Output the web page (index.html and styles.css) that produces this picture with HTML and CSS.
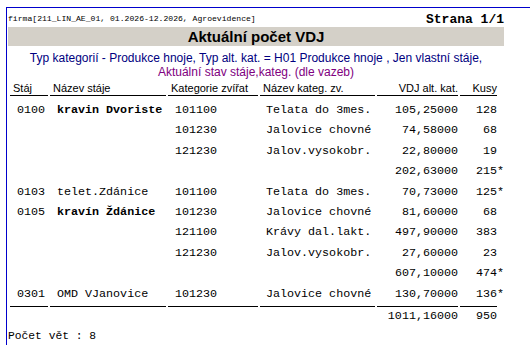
FILE: index.html
```html
<!DOCTYPE html>
<html lang="cs">
<head>
<meta charset="utf-8">
<title>Aktuální počet VDJ</title>
<link rel="stylesheet" href="styles.css">
</head>
<body>
<div class="page">
  <div class="top">
    <span class="firma">firma[211_LIN_AE_01, 01.2026-12.2026, Agroevidence]</span>
    <span class="strana">Strana 1/1</span>
  </div>
  <div class="titlebar">Aktuální počet VDJ</div>
  <div class="sub sub1">Typ kategorií - Produkce hnoje, Typ alt. kat. = H01 Produkce hnoje , Jen vlastní stáje,</div>
  <div class="sub sub2">Aktuální stav stáje,kateg. (dle vazeb)</div>

  <div class="grid head">
    <div class="h">Stáj</div>
    <div class="h">Název stáje</div>
    <div class="h">Kategorie zvířat</div>
    <div class="h">Název kateg. zv.</div>
    <div class="h r">VDJ alt. kat.</div>
    <div class="h r">Kusy</div>
  </div>

  <div class="rows">
    <div class="grid row"><div class="c">0100</div><div class="c b">kravin Dvoriste</div><div class="c">101100</div><div class="c n">Telata do 3mes.</div><div class="c r">105,25000</div><div class="c r">128</div></div>
    <div class="grid row"><div class="c"></div><div class="c"></div><div class="c">101230</div><div class="c n">Jalovice chovné</div><div class="c r">74,58000</div><div class="c r">68</div></div>
    <div class="grid row"><div class="c"></div><div class="c"></div><div class="c">121230</div><div class="c n">Jalov.vysokobr.</div><div class="c r">22,80000</div><div class="c r">19</div></div>
    <div class="grid row"><div class="c"></div><div class="c"></div><div class="c"></div><div class="c"></div><div class="c r">202,63000</div><div class="c r">215<span class="star">*</span></div></div>
    <div class="grid row"><div class="c">0103</div><div class="c">telet.Zdánice</div><div class="c">101100</div><div class="c n">Telata do 3mes.</div><div class="c r">70,73000</div><div class="c r">125<span class="star">*</span></div></div>
    <div class="grid row"><div class="c">0105</div><div class="c b">kravín Ždánice</div><div class="c">101230</div><div class="c n">Jalovice chovné</div><div class="c r">81,60000</div><div class="c r">68</div></div>
    <div class="grid row"><div class="c"></div><div class="c"></div><div class="c">121100</div><div class="c n">Krávy dal.lakt.</div><div class="c r">497,90000</div><div class="c r">383</div></div>
    <div class="grid row"><div class="c"></div><div class="c"></div><div class="c">121230</div><div class="c n">Jalov.vysokobr.</div><div class="c r">27,60000</div><div class="c r">23</div></div>
    <div class="grid row"><div class="c"></div><div class="c"></div><div class="c"></div><div class="c"></div><div class="c r">607,10000</div><div class="c r">474<span class="star">*</span></div></div>
    <div class="grid row"><div class="c">0301</div><div class="c">OMD VJanovice</div><div class="c">101230</div><div class="c n">Jalovice chovné</div><div class="c r">130,70000</div><div class="c r">136<span class="star">*</span></div></div>
  </div>

  <div class="grid rule">
    <div class="seg"></div><div class="seg"></div><div class="seg"></div><div class="seg"></div><div class="seg"></div><div class="seg"></div>
  </div>
  <div class="grid total">
    <div class="c"></div><div class="c"></div><div class="c"></div><div class="c"></div><div class="c r">1011,16000</div><div class="c r">950</div>
  </div>

  <div class="count">Počet vět : 8</div>
</div>
</body>
</html>
```

FILE: styles.css
```css
html, body {
  margin: 0;
  padding: 0;
  background: #ffffff;
}

body {
  width: 530px;
  height: 345px;
  overflow: hidden;
}

.page {
  margin: 7px 0 0 6px;
  border-top: 1px solid #0000cc;
  border-left: 1px solid #0000cc;
  padding-left: 1px;
  height: 340px;
  box-sizing: border-box;
  color: #000;
}

.top {
  width: 496px;
  height: 19px;
  display: flex;
  justify-content: space-between;
  align-items: center;
  font-family: "Liberation Mono", "Courier New", monospace;
}

.firma {
  font-size: 8.1px;
  color: #000;
  padding-top: 2px;
}

.strana {
  font-size: 13px;
  font-weight: bold;
  padding-top: 3px;
}

.titlebar {
  width: 496px;
  height: 19px;
  line-height: 19px;
  background: #d4d0c8;
  text-align: center;
  font-family: "Liberation Sans", Arial, sans-serif;
  font-weight: bold;
  font-size: 15px;
}

.sub {
  width: 496px;
  text-align: center;
  font-family: "Liberation Sans", Arial, sans-serif;
  font-size: 12px;
  line-height: 14px;
  height: 14px;
}

.sub1 {
  margin-top: 5px;
  color: #000080;
}

.sub2 {
  color: #800080;
}

.grid {
  display: grid;
  grid-template-columns: 38px 116px 90px 115px 81px 37px;
  column-gap: 2px;
  margin-left: 2px;
}

.head {
  margin-top: 2px;
  font-family: "Liberation Sans", Arial, sans-serif;
  font-size: 11px;
}

.h {
  height: 14px;
  line-height: 14px;
  border-bottom: 1px solid #000;
  padding-left: 3px;
  white-space: nowrap;
}

.h.r {
  padding-left: 0;
  text-align: right;
}

.rows {
  margin-top: 4px;
}

.row {
  height: 20.4px;
  line-height: 20.4px;
  font-family: "Liberation Mono", "Courier New", monospace;
  font-size: 11.7px;
}

.c {
  padding-left: 7px;
  white-space: nowrap;
}

.c.n {
  padding-left: 6px;
}

.c.r {
  padding-left: 0;
  text-align: right;
}

.c.b {
  font-weight: bold;
}

.star {
  display: inline-block;
  width: 0;
  overflow: visible;
}

.rule {
  margin-top: 2px;
  height: 2px;
}

.seg {
  border-top: 1px solid #000;
}

.total {
  height: 16px;
  line-height: 16px;
  font-family: "Liberation Mono", "Courier New", monospace;
  font-size: 11.7px;
}

.count {
  margin-top: 5px;
  font-family: "Liberation Mono", "Courier New", monospace;
  font-size: 11.3px;
  line-height: 14px;
}
```
